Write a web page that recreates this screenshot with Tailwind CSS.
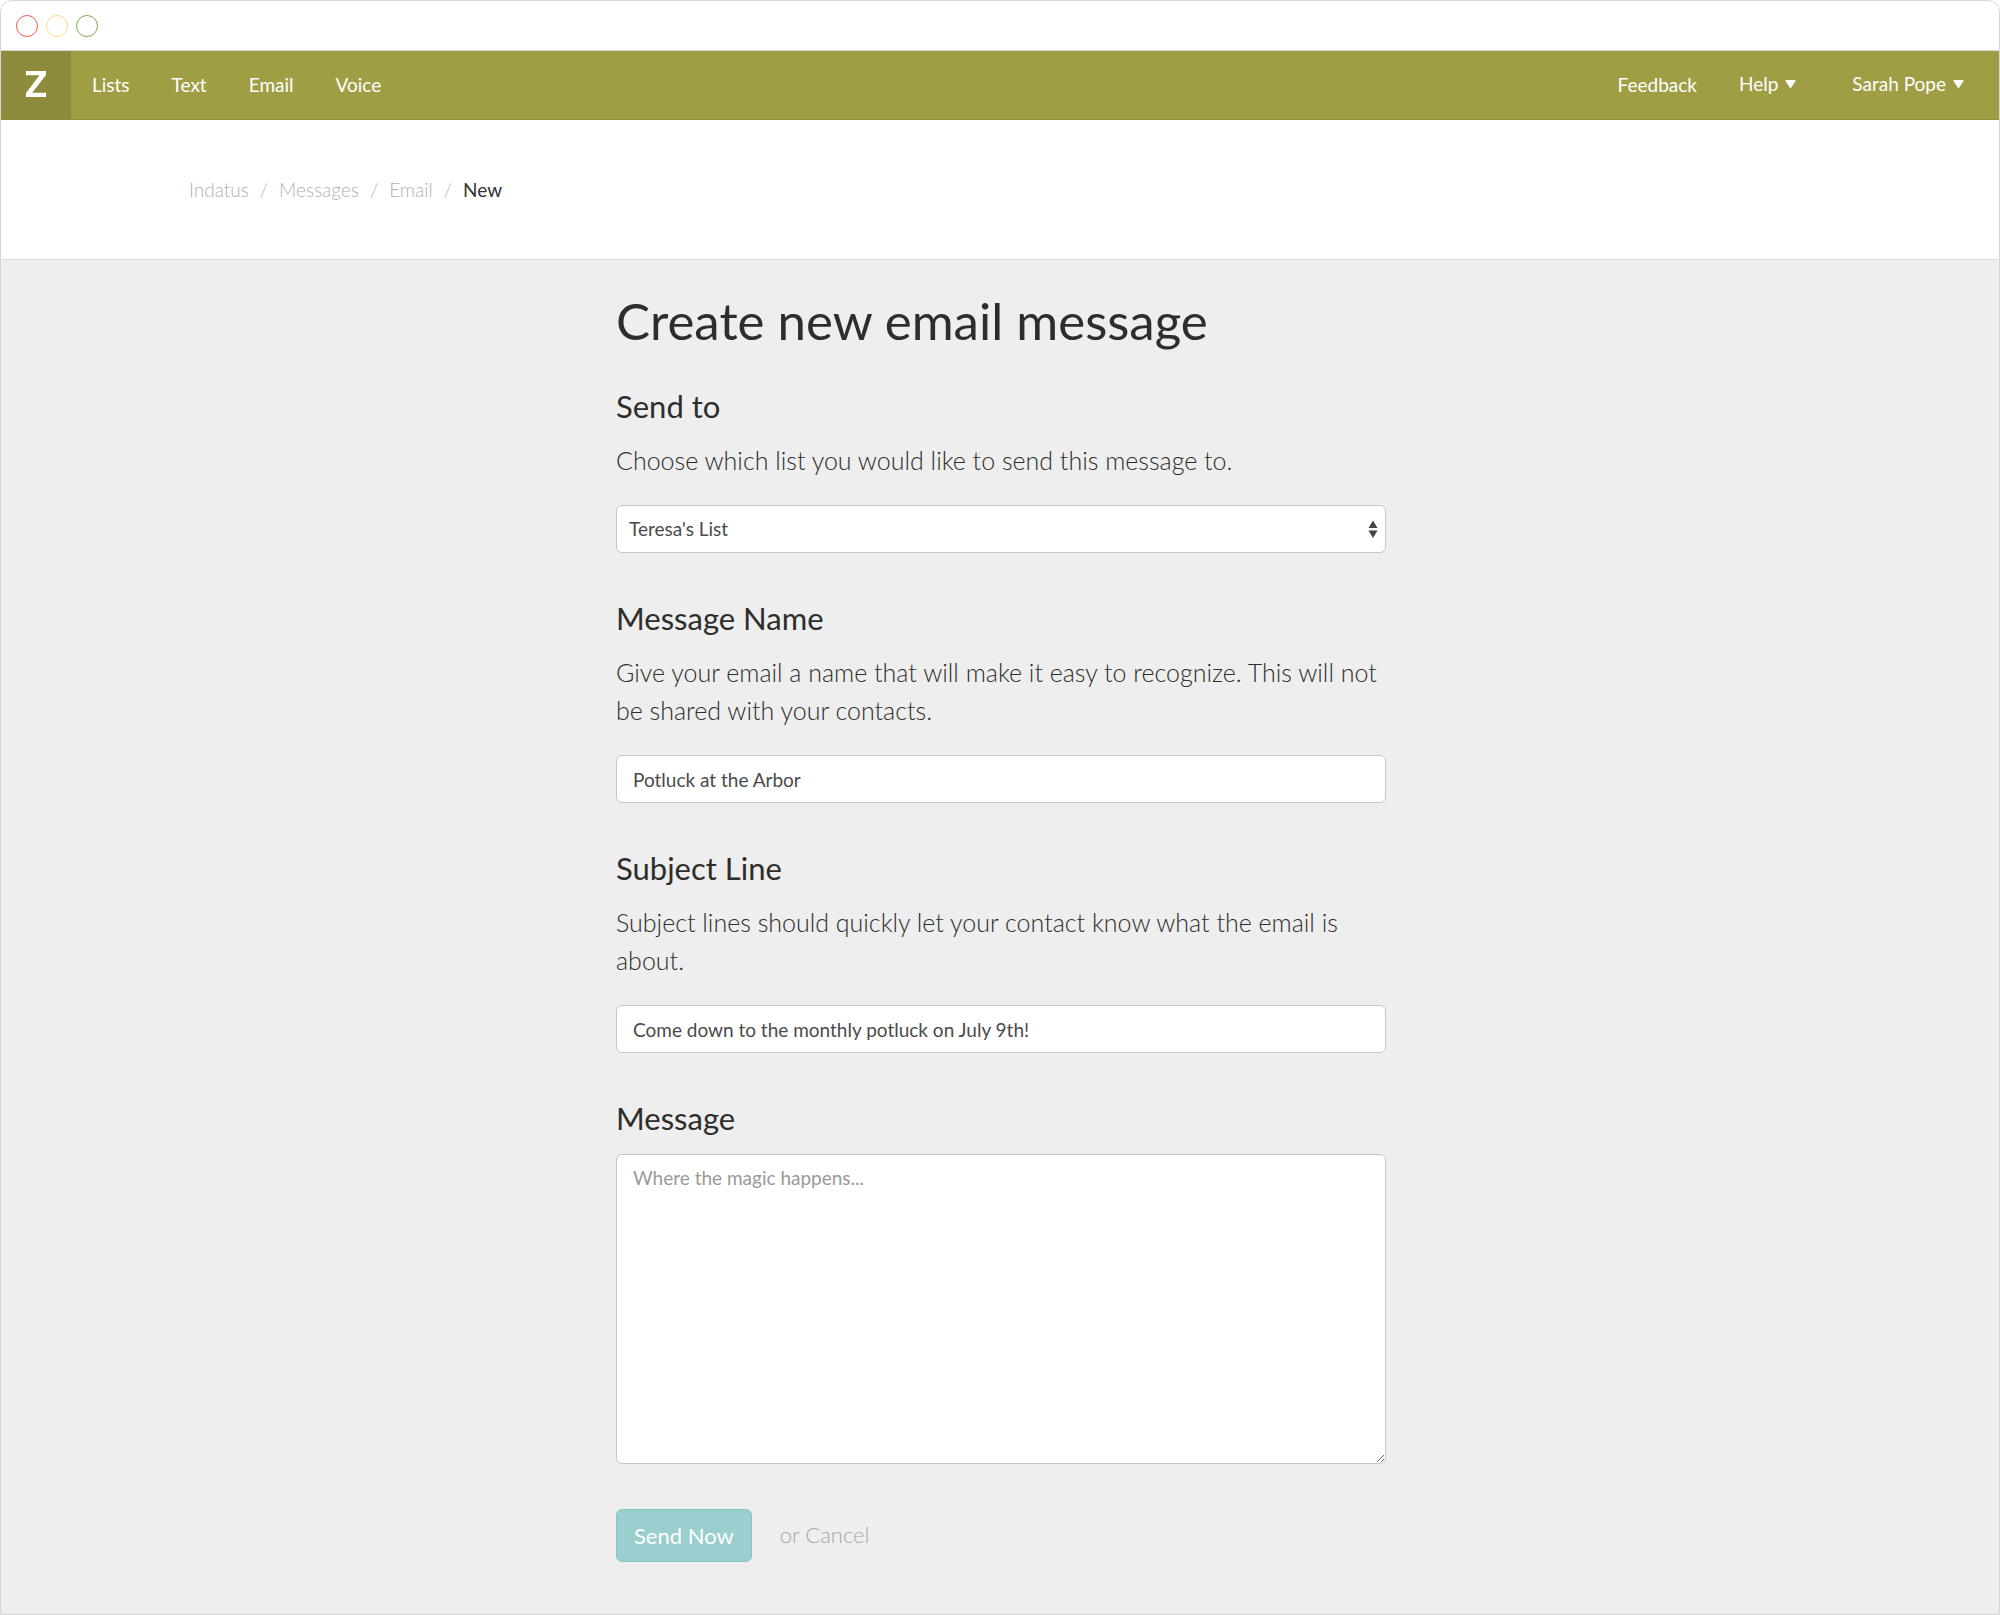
<!DOCTYPE html>
<html lang="en">
<head>
<meta charset="utf-8">
<meta name="viewport" content="width=device-width, initial-scale=1">
<title>Create new email message</title>
<script src="https://cdn.jsdelivr.net/npm/@tailwindcss/browser@4"></script>
</head>
<body class="min-h-screen bg-white font-['Lato',sans-serif] text-[#2d2d2a]">
<div class="flex min-h-screen flex-col overflow-hidden rounded-t-xl border border-[#d6d6d6]">

  <!-- Window title bar -->
  <div class="flex h-[50px] items-center gap-2 border-b border-[#d6d6d6] px-[15px]">
    <span class="size-[22px] rounded-full border border-[#ee5c50]"></span>
    <span class="size-[22px] rounded-full border border-[#fbdc7c]"></span>
    <span class="size-[22px] rounded-full border border-[#7fa850]"></span>
  </div>

  <!-- Main navigation -->
  <nav class="flex h-[69px] items-stretch border-b border-[#8f9032] bg-[#9f9e44] text-[19px] text-white">
    <a href="#" aria-label="Home" class="flex w-[70px] items-center justify-center bg-[#8f8b3c] pb-0.5">
      <svg viewBox="0 0 20 26" class="h-[26px] w-5" fill="currentColor" aria-hidden="true"><path d="M0 0H20V4L6.200 21.700H20V26H0V22L13.500 4.300H0Z"/></svg>
    </a>
    <div class="flex items-center gap-[42px] pl-[21px]">
      <a href="#">Lists</a>
      <a href="#">Text</a>
      <a href="#">Email</a>
      <a href="#">Voice</a>
    </div>
    <div class="ml-auto flex items-center pr-[35px]">
      <a href="#" class="mr-[42px]">Feedback</a>
      <button type="button" class="mr-14 flex items-center gap-[7px] pb-0.5">Help
        <svg viewBox="0 0 11 8" class="h-2 w-[11px]" fill="currentColor" aria-hidden="true"><path d="M1 0H10Q11.200 0 10.500 1L6.300 7.400Q5.500 8.400 4.700 7.400L.5 1Q-.2 0 1 0Z"/></svg>
      </button>
      <button type="button" class="flex items-center gap-[7px] pb-0.5">Sarah Pope
        <svg viewBox="0 0 11 8" class="h-2 w-[11px]" fill="currentColor" aria-hidden="true"><path d="M1 0H10Q11.200 0 10.500 1L6.300 7.400Q5.500 8.400 4.700 7.400L.5 1Q-.2 0 1 0Z"/></svg>
      </button>
    </div>
  </nav>

  <!-- Breadcrumb -->
  <header class="border-b border-[#dedede]">
    <ol class="mx-auto flex h-[139px] w-full max-w-[1622px] items-center gap-[11px] pt-0.5 text-[19px] font-light text-[#b0b0b4]">
      <li><a href="#">Indatus</a></li>
      <li aria-hidden="true">/</li>
      <li><a href="#">Messages</a></li>
      <li aria-hidden="true">/</li>
      <li><a href="#">Email</a></li>
      <li aria-hidden="true">/</li>
      <li class="font-normal text-[#333]" aria-current="page">New</li>
    </ol>
  </header>

  <!-- Message form -->
  <main class="grow bg-[#eee] pl-0.5">
    <form class="mx-auto w-full max-w-[770px] pt-[31px] pb-[50px]">
      <h1 class="text-[51px] leading-[60px]">Create new email message</h1>

      <label for="list" class="mt-[35px] block text-[31px] leading-10">Send to</label>
      <p class="mt-[15px] text-[25px] leading-[38px] font-light">Choose which list you would like to send this message to.</p>
      <div class="relative mt-[26px]">
        <select id="list" class="block h-12 w-full appearance-none rounded-md border border-[#c6c6c6] bg-white px-3 text-[19px] text-[#4a4a4a]">
          <option>Teresa's List</option>
        </select>
        <svg viewBox="0 0 10 18" class="pointer-events-none absolute top-[15px] right-2 h-[18px] w-2.5" fill="#444" aria-hidden="true"><path d="M5 .5L9.500 8H.5ZM5 18L.5 10.500H9.500Z"/></svg>
      </div>

      <label for="name" class="mt-[45px] block text-[31px] leading-10">Message Name</label>
      <p class="mt-[15px] text-[25px] leading-[38px] font-light">Give your email a name that will make it easy to recognize. This will not be shared with your contacts.</p>
      <input id="name" type="text" value="Potluck at the Arbor" class="mt-[26px] block h-12 w-full rounded-md border border-[#c6c6c6] bg-white px-4 text-[19px] text-[#4a4a4a]">

      <label for="subject" class="mt-[45px] block text-[31px] leading-10">Subject Line</label>
      <p class="mt-[15px] text-[25px] leading-[38px] font-light">Subject lines should quickly let your contact know what the email is about.</p>
      <input id="subject" type="text" value="Come down to the monthly potluck on July 9th!" class="mt-[26px] block h-12 w-full rounded-md border border-[#c6c6c6] bg-white px-4 text-[19px] text-[#4a4a4a]">

      <label for="message" class="mt-[45px] block text-[31px] leading-10">Message</label>
      <textarea id="message" placeholder="Where the magic happens..." class="mt-4 block h-[310px] w-full resize-y rounded-md border border-[#c6c6c6] bg-white px-4 py-[9px] text-[19px] placeholder:text-[#999]"></textarea>

      <div class="mt-[45px] flex items-center gap-7">
        <button type="submit" class="h-[53px] rounded-md border border-[#84c8c6] bg-[#99cfce] px-[17px] text-[22px] text-white">Send Now</button>
        <a href="#" class="pb-0.5 text-[22px] font-light text-[#a8a8ac]">or Cancel</a>
      </div>
    </form>
  </main>
</div>
</body>
</html>
